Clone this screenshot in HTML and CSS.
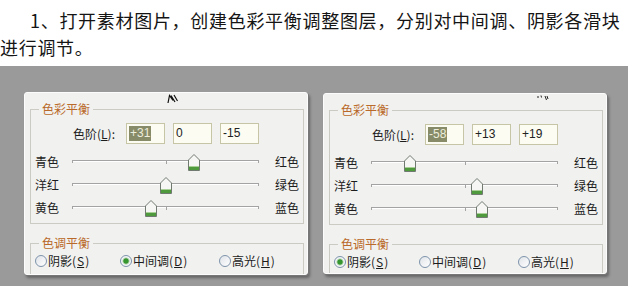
FILE: index.html
```html
<!DOCTYPE html>
<html lang="zh-CN">
<head>
<meta charset="utf-8">
<title>色彩平衡</title>
<link rel="stylesheet" href="styles.css">
</head>
<body>
<div class="intro">
  <p class="lead">1、打开素材图片，创建色彩平衡调整图层，分别对中间调、阴影各滑块<br>进行调节。</p>
</div>
<div class="stage">
  <div class="panel">
    <svg class="cursor cursor-a" width="12" height="11" viewBox="0 0 12 11"><path d="M1 9 L2.5 1.5 L6 6.5 M4 1.5 L8 8 M7 1 L10.5 7" fill="none" stroke="#111" stroke-width="1.2"/></svg>
    <fieldset class="group balance">
      <legend>色彩平衡</legend>
      <div class="levels">
        <span class="levels-label">色阶(<u>L</u>):</span>
        <span class="num"><span class="sel">+31</span></span>
        <span class="num">0</span>
        <span class="num">-15</span>
      </div>
      <div class="slider first">
        <span>青色</span>
        <div class="track"><span class="mid"></span><svg class="thumb" style="left:65.5%" width="12" height="17" viewBox="0 0 12 17"><path d="M0.5 6 L6 0.5 L11.5 6 V16.5 H0.5 Z" fill="#f6f7f5" stroke="#707a70"/><rect x="1" y="12" width="10" height="1" fill="#a8d096"/><rect x="1" y="13" width="10" height="3" fill="#4e9a3c"/></svg></div>
        <span class="end">红色</span>
      </div>
      <div class="slider">
        <span>洋红</span>
        <div class="track"><span class="mid"></span><svg class="thumb" style="left:50%" width="12" height="17" viewBox="0 0 12 17"><path d="M0.5 6 L6 0.5 L11.5 6 V16.5 H0.5 Z" fill="#f6f7f5" stroke="#707a70"/><rect x="1" y="12" width="10" height="1" fill="#a8d096"/><rect x="1" y="13" width="10" height="3" fill="#4e9a3c"/></svg></div>
        <span class="end">绿色</span>
      </div>
      <div class="slider">
        <span>黄色</span>
        <div class="track"><span class="mid"></span><svg class="thumb" style="left:42.5%" width="12" height="17" viewBox="0 0 12 17"><path d="M0.5 6 L6 0.5 L11.5 6 V16.5 H0.5 Z" fill="#f6f7f5" stroke="#707a70"/><rect x="1" y="12" width="10" height="1" fill="#a8d096"/><rect x="1" y="13" width="10" height="3" fill="#4e9a3c"/></svg></div>
        <span class="end">蓝色</span>
      </div>
    </fieldset>
    <fieldset class="group tone">
      <legend>色调平衡</legend>
      <div class="radios">
        <label class="radio"><span class="dot"></span>阴影(<u>S</u>)</label>
        <label class="radio checked"><span class="dot"></span>中间调(<u>D</u>)</label>
        <label class="radio"><span class="dot"></span>高光(<u>H</u>)</label>
      </div>
    </fieldset>
  </div>

  <div class="panel second">
    <svg class="cursor cursor-b" width="12" height="7" viewBox="0 0 12 7"><path d="M1 1 V3 M4 0.5 L4.5 2.5 M8 1 L9.5 5 M10 1 L11 4" fill="none" stroke="#222" stroke-width="1"/></svg>
    <fieldset class="group balance">
      <legend>色彩平衡</legend>
      <div class="levels">
        <span class="levels-label">色阶(<u>L</u>):</span>
        <span class="num"><span class="sel">-58</span></span>
        <span class="num">+13</span>
        <span class="num">+19</span>
      </div>
      <div class="slider first">
        <span>青色</span>
        <div class="track"><span class="mid"></span><svg class="thumb" style="left:21%" width="12" height="17" viewBox="0 0 12 17"><path d="M0.5 6 L6 0.5 L11.5 6 V16.5 H0.5 Z" fill="#f6f7f5" stroke="#707a70"/><rect x="1" y="12" width="10" height="1" fill="#a8d096"/><rect x="1" y="13" width="10" height="3" fill="#4e9a3c"/></svg></div>
        <span class="end">红色</span>
      </div>
      <div class="slider">
        <span>洋红</span>
        <div class="track"><span class="mid"></span><svg class="thumb" style="left:56.5%" width="12" height="17" viewBox="0 0 12 17"><path d="M0.5 6 L6 0.5 L11.5 6 V16.5 H0.5 Z" fill="#f6f7f5" stroke="#707a70"/><rect x="1" y="12" width="10" height="1" fill="#a8d096"/><rect x="1" y="13" width="10" height="3" fill="#4e9a3c"/></svg></div>
        <span class="end">绿色</span>
      </div>
      <div class="slider">
        <span>黄色</span>
        <div class="track"><span class="mid"></span><svg class="thumb" style="left:59.5%" width="12" height="17" viewBox="0 0 12 17"><path d="M0.5 6 L6 0.5 L11.5 6 V16.5 H0.5 Z" fill="#f6f7f5" stroke="#707a70"/><rect x="1" y="12" width="10" height="1" fill="#a8d096"/><rect x="1" y="13" width="10" height="3" fill="#4e9a3c"/></svg></div>
        <span class="end">蓝色</span>
      </div>
    </fieldset>
    <fieldset class="group tone">
      <legend>色调平衡</legend>
      <div class="radios">
        <label class="radio checked"><span class="dot"></span>阴影(<u>S</u>)</label>
        <label class="radio"><span class="dot"></span>中间调(<u>D</u>)</label>
        <label class="radio"><span class="dot"></span>高光(<u>H</u>)</label>
      </div>
    </fieldset>
  </div>
</div>
</body>
</html>
```

FILE: styles.css
```css
html, body {
  margin: 0;
  padding: 0;
}

body {
  width: 628px;
  height: 286px;
  overflow: hidden;
  background: #9a9a9a;
  font-family: "Noto Sans CJK SC", "Noto Sans", sans-serif;
}

.intro {
  height: 66px;
  box-sizing: border-box;
  padding-top: 7px;
  background: #ffffff;
}

.lead {
  margin: 0;
  font-size: 18px;
  line-height: 27px;
  letter-spacing: 0.7px;
  text-indent: 30px;
  white-space: nowrap;
  color: #151515;
  font-weight: 400;
}

.stage {
  height: 220px;
  box-sizing: border-box;
  padding: 26px 0 0 24px;
  display: flex;
  align-items: flex-start;
  gap: 15px;
  background: #9a9a9a;
}

.panel {
  position: relative;
  width: 284px;
  height: 183px;
  box-sizing: border-box;
  overflow: hidden;
  background: #f1f1ef;
  border: 1px solid #fcfcfc;
  border-radius: 3px;
  box-shadow: 1px 1px 0 #777777, 2px 3px 3px rgba(0, 0, 0, 0.35);
  font-size: 12px;
  color: #1c1c1c;
}

.panel.second {
  margin-top: 1px;
  height: 181px;
}

.cursor {
  position: absolute;
  top: 1px;
}

.cursor-a {
  left: 142px;
}

.cursor-b {
  left: 213px;
  top: 1px;
}

.group {
  margin: 0 3px 0 5px;
  padding: 0;
  min-width: 0;
  border: 1px solid #cbcbc3;
}

.group legend {
  margin-left: 8px;
  padding: 0 3px;
  line-height: 16px;
  font-size: 12px;
  color: #b9692a;
}

.balance {
  margin-top: 8px;
  padding-bottom: 4px;
}

.levels {
  display: flex;
  align-items: center;
  height: 21px;
  margin-top: 6px;
}

.levels-label {
  margin-left: 42px;
  width: 53px;
  line-height: 21px;
}

.num {
  width: 39px;
  height: 21px;
  box-sizing: border-box;
  margin-right: 8px;
  padding-left: 2px;
  border: 1px solid #c6c6a6;
  background: #fcfcf2;
  font-family: "Liberation Sans", Arial, sans-serif;
  font-size: 12px;
  line-height: 19px;
  color: #222;
}

.sel {
  display: inline-block;
  padding: 0 1px;
  line-height: 15px;
  background: #878b68;
  color: #eeeedc;
}

.slider {
  display: grid;
  grid-template-columns: 37px 187px auto;
  align-items: center;
  height: 23px;
  padding-left: 4px;
  line-height: 23px;
}

.slider .end {
  padding-left: 16px;
  white-space: nowrap;
}

.slider.first {
  margin-top: 6px;
}

.track {
  position: relative;
  height: 23px;
}

.track::before {
  content: "";
  position: absolute;
  top: 10px;
  left: 0;
  right: 0;
  height: 2px;
  border: 1px solid #a3a3a3;
  border-bottom: none;
  box-shadow: inset 0 1px 0 #ffffff;
}

.mid {
  position: absolute;
  top: 11px;
  left: 50%;
  width: 1px;
  height: 3px;
  background: #a3a3a3;
}

.thumb {
  position: absolute;
  top: 4px;
  margin-left: -6px;
  display: block;
}

.tone {
  margin-top: 11px;
  height: 60px;
  border-bottom: none;
}

.radios {
  display: grid;
  grid-template-columns: 85px 99px auto;
  align-items: center;
  height: 20px;
  padding-left: 4px;
}

.radio {
  display: flex;
  align-items: center;
  gap: 1px;
  line-height: 20px;
}

.dot {
  width: 12px;
  height: 12px;
  box-sizing: border-box;
  border: 1px solid #7d93ab;
  border-radius: 50%;
  background: linear-gradient(135deg, #dfe3e8, #ffffff);
}

.radio.checked .dot {
  background: radial-gradient(circle, #35962f 0, #35962f 2.2px, #a9cfa4 3px, #f4f6f8 4px);
}

u {
  text-decoration: underline;
  text-underline-offset: 1px;
}
```
